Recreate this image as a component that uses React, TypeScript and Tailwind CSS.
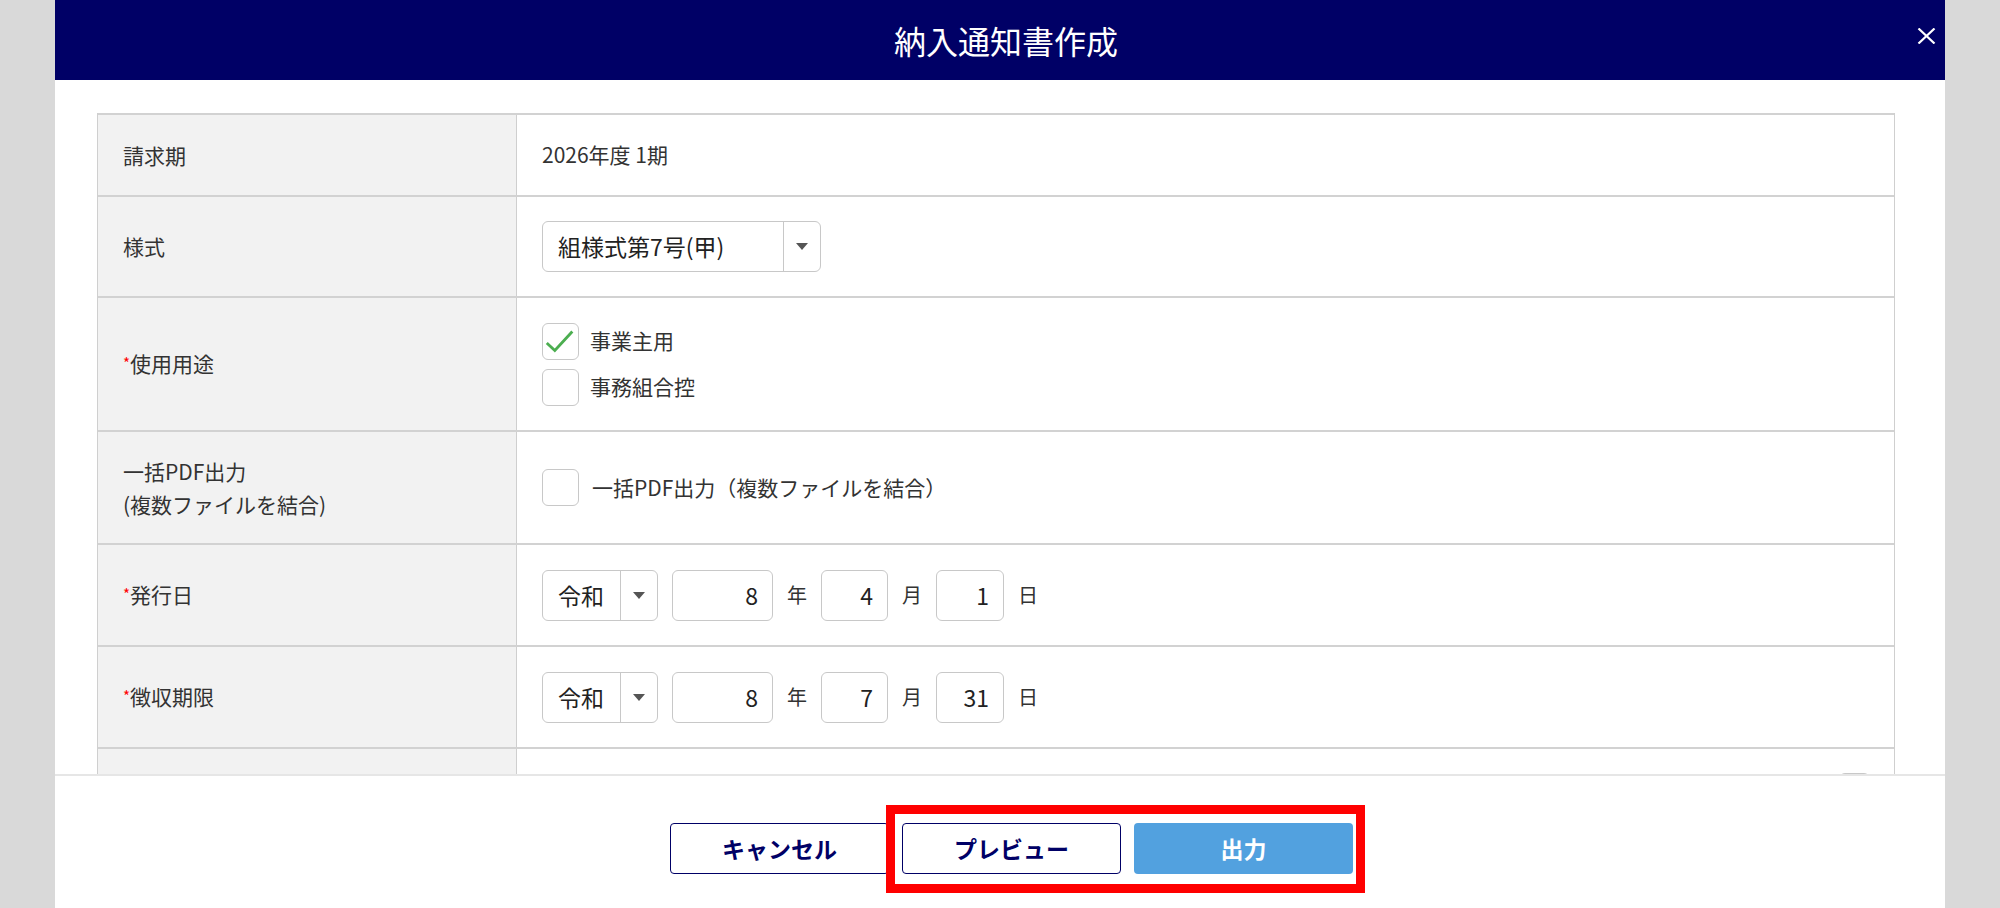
import type { ReactNode } from "react";

function Caret() {
  return (
    <svg width="12" height="7" viewBox="0 0 12 7">
      <path d="M0 0h12L6 7z" fill="#555" />
    </svg>
  );
}

function Checkbox({ checked }: { checked?: boolean }) {
  return (
    <span className="flex h-[37px] w-[37px] shrink-0 items-center justify-center rounded-[6px] border border-[#c8c8c8] bg-white">
      {checked && (
        <svg width="37" height="37" viewBox="0 0 37 37">
          <polyline points="4,20 12.5,28 31,8" fill="none" stroke="#4cae50" strokeWidth="3" />
        </svg>
      )}
    </span>
  );
}

function Required() {
  return <span className="relative -top-[3px] text-[15px] text-[#ff0000]">*</span>;
}

function Row({ label, height, children }: { label: ReactNode; height: string; children?: ReactNode }) {
  return (
    <div className={`flex border-t-2 border-[#d2d2d2] ${height}`}>
      <div className="flex w-[419px] shrink-0 items-center border-r border-[#cfcfcf] bg-[#f2f2f2] pl-[25px] text-[21px] leading-[33px] text-[#333]">
        <div>{label}</div>
      </div>
      <div className="flex flex-1 items-center px-[25px] text-[21px] text-[#333]">{children}</div>
    </div>
  );
}

function EraDate({ year, month, day }: { year: string; month: string; day: string }) {
  return (
    <div className="flex items-center gap-[14px]">
      <div className="flex h-[51px] w-[116px] items-center rounded-[6px] border border-[#c8c8c8] text-[23px] text-[#222]">
        <span className="flex-1 pl-[15px]">令和</span>
        <span className="flex h-full w-[37px] items-center justify-center border-l border-[#c8c8c8]">
          <Caret />
        </span>
      </div>
      <div className="flex h-[51px] w-[101px] items-center justify-end rounded-[6px] border border-[#c8c8c8] pr-[14px] text-[23px] text-[#222]">
        {year}
      </div>
      <span className="text-[20px]">年</span>
      <div className="flex h-[51px] w-[67px] items-center justify-end rounded-[6px] border border-[#c8c8c8] pr-[14px] text-[23px] text-[#222]">
        {month}
      </div>
      <span className="text-[20px]">月</span>
      <div className="flex h-[51px] w-[68px] items-center justify-end rounded-[6px] border border-[#c8c8c8] pr-[14px] text-[23px] text-[#222]">
        {day}
      </div>
      <span className="text-[20px]">日</span>
    </div>
  );
}

export default function App() {
  return (
    <div className="flex h-[908px] w-full justify-center overflow-hidden bg-[#d9d9d9] font-['Noto_Sans_CJK_JP',sans-serif]">
      <div className="flex w-[1890px] flex-col bg-white">
        <div className="relative flex h-[80px] shrink-0 items-center justify-center bg-[#000066] pl-[12px]">
          <h1 className="text-[32px] text-white">納入通知書作成</h1>
          <button className="absolute right-[9px] top-[26px] flex h-[20px] w-[20px] items-center justify-center">
            <svg width="19" height="16" viewBox="0 0 19 16">
              <path d="M1.5 0.5L17.5 15.5M17.5 0.5L1.5 15.5" stroke="#fff" strokeWidth="2.2" />
            </svg>
          </button>
        </div>

        <div className="flex-1 overflow-hidden pl-[42px] pr-[50px] pt-[33px]">
          <div className="border-x border-[#cfcfcf]">
            <Row label="請求期" height="h-[82px]">
              2026年度 1期
            </Row>
            <Row label="様式" height="h-[101px]">
              <div className="flex h-[51px] w-[279px] items-center rounded-[6px] border border-[#c8c8c8] text-[23px] text-[#222]">
                <span className="flex-1 pl-[15px]">組様式第7号(甲)</span>
                <span className="flex h-full w-[37px] items-center justify-center border-l border-[#c8c8c8]">
                  <Caret />
                </span>
              </div>
            </Row>
            <Row
              label={
                <>
                  <Required />
                  使用用途
                </>
              }
              height="h-[134px]"
            >
              <div className="flex flex-col gap-[9px]">
                <label className="flex items-center gap-[11px]">
                  <Checkbox checked />
                  事業主用
                </label>
                <label className="flex items-center gap-[11px]">
                  <Checkbox />
                  事務組合控
                </label>
              </div>
            </Row>
            <Row
              label={
                <>
                  一括PDF出力
                  <br />
                  (複数ファイルを結合)
                </>
              }
              height="h-[113px]"
            >
              <label className="flex items-center gap-[13px]">
                <Checkbox />
                一括PDF出力（複数ファイルを結合）
              </label>
            </Row>
            <Row
              label={
                <>
                  <Required />
                  発行日
                </>
              }
              height="h-[102px]"
            >
              <EraDate year="8" month="4" day="1" />
            </Row>
            <Row
              label={
                <>
                  <Required />
                  徴収期限
                </>
              }
              height="h-[102px]"
            >
              <EraDate year="8" month="7" day="31" />
            </Row>
            <div className="flex h-[102px] border-t-2 border-[#d2d2d2]">
              <div className="w-[419px] shrink-0 border-r border-[#cfcfcf] bg-[#f2f2f2]" />
              <div className="flex flex-1 justify-end pr-[24px] pt-[24px]">
                <span className="h-[31px] w-[31px] rounded-[6px] border border-[#c8c8c8]" />
              </div>
            </div>
          </div>
        </div>

        <div className="relative flex h-[134px] shrink-0 justify-center gap-[13px] border-t-2 border-[#e6e6e6] pl-[23px] pt-[47px]">
          <button className="h-[51px] w-[219px] rounded-[4px] border border-[#000066] bg-white text-[23px] font-bold text-[#000066]">
            キャンセル
          </button>
          <button className="h-[51px] w-[219px] rounded-[4px] border border-[#000066] bg-white text-[23px] font-bold text-[#000066]">
            プレビュー
          </button>
          <button className="h-[51px] w-[219px] rounded-[4px] bg-[#52a1df] text-[23px] font-bold text-white">
            出力
          </button>
          <div className="pointer-events-none absolute left-[831px] top-[29px] h-[88px] w-[479px] border-[9px] border-[#ff0000]" />
        </div>
      </div>
    </div>
  );
}
